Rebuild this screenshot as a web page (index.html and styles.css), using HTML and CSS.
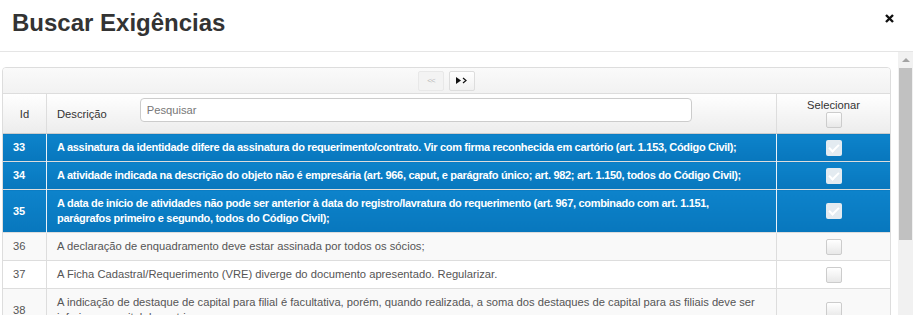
FILE: index.html
```html
<!DOCTYPE html>
<html lang="pt-BR">
<head>
    <meta charset="UTF-8">
    <title>Buscar Exigências</title>
    <link rel="stylesheet" href="styles.css">
</head>
<body>
    <div class="modal">
        <div class="modal-header">
            <h4 class="modal-title">Buscar Exigências</h4>
            <button class="close" type="button">
                <svg width="9" height="9" viewBox="0 0 9 9"><path d="M1 1L8 8M8 1L1 8" stroke="#111" stroke-width="2.4"/></svg>
            </button>
        </div>
        <div class="modal-body">
            <div class="content">
                <div class="grid">
                    <div class="pager">
                        <button class="pg-btn disabled">&lt;&lt;</button>
                        <button class="pg-btn">
                            <svg width="12" height="7" viewBox="0 0 12 7"><path d="M0 0L5 3.5L0 7Z" fill="#111"/><path d="M7 1L10 3.5L7 6" stroke="#111" stroke-width="1.2" fill="none"/></svg>
                        </button>
                    </div>
                    <table class="tbl">
                        <thead>
                            <tr>
                                <th class="col-id">Id</th>
                                <th class="col-desc">
                                    <div class="desc-head">
                                        <span>Descrição</span>
                                        <input class="search" type="text" placeholder="Pesquisar">
                                    </div>
                                </th>
                                <th class="col-sel">Selecionar<br><span class="chk"></span></th>
                            </tr>
                        </thead>
                        <tbody>
                            <tr class="selected">
                                <td class="col-id">33</td>
                                <td>A assinatura da identidade difere da assinatura do requerimento/contrato. Vir com firma reconhecida em cartório (art. 1.153, Código Civil);</td>
                                <td class="col-sel"><span class="chk checked"></span></td>
                            </tr>
                            <tr class="selected">
                                <td class="col-id">34</td>
                                <td>A atividade indicada na descrição do objeto não é empresária (art. 966, caput, e parágrafo único; art. 982; art. 1.150, todos do Código Civil);</td>
                                <td class="col-sel"><span class="chk checked"></span></td>
                            </tr>
                            <tr class="selected">
                                <td class="col-id">35</td>
                                <td>A data de início de atividades não pode ser anterior à data do registro/lavratura do requerimento (art. 967, combinado com art. 1.151,<br>parágrafos primeiro e segundo, todos do Código Civil);</td>
                                <td class="col-sel"><span class="chk checked"></span></td>
                            </tr>
                            <tr class="odd">
                                <td class="col-id">36</td>
                                <td>A declaração de enquadramento deve estar assinada por todos os sócios;</td>
                                <td class="col-sel"><span class="chk"></span></td>
                            </tr>
                            <tr>
                                <td class="col-id">37</td>
                                <td>A Ficha Cadastral/Requerimento (VRE) diverge do documento apresentado. Regularizar.</td>
                                <td class="col-sel"><span class="chk"></span></td>
                            </tr>
                            <tr class="odd">
                                <td class="col-id">38</td>
                                <td>A indicação de destaque de capital para filial é facultativa, porém, quando realizada, a soma dos destaques de capital para as filiais deve ser<br>inferior ao capital da matriz.</td>
                                <td class="col-sel"><span class="chk"></span></td>
                            </tr>
                        </tbody>
                    </table>
                </div>
            </div>
            <div class="scrollbar">
                <div class="sb-arrow"></div>
                <div class="sb-thumb"></div>
            </div>
        </div>
    </div>
</body>
</html>
```

FILE: styles.css
```css
body {
    margin: 0;
    background: #fff;
    font-family: "Liberation Sans", Arial, sans-serif;
    color: #333;
    overflow: hidden;
}

.modal {
    width: 913px;
    height: 315px;
    display: flex;
    flex-direction: column;
}

.modal-header {
    height: 52px;
    box-sizing: border-box;
    display: flex;
    align-items: center;
    justify-content: space-between;
    padding: 0 19px 6px 12px;
    border-bottom: 1px solid #e5e5e5;
}

.modal-title {
    margin: 0;
    font-size: 24px;
    font-weight: bold;
    color: #333;
}

.close {
    border: 0;
    background: none;
    padding: 0;
    margin-top: -8px;
    display: flex;
}

.modal-body {
    flex: 1;
    display: flex;
    min-height: 0;
}

.content {
    flex: 1;
    padding: 15px 7px 0 2px;
    overflow: hidden;
}

.grid {
    border: 1px solid #ddd;
    border-radius: 4px 4px 0 0;
    overflow: hidden;
}

.pager {
    height: 25px;
    display: flex;
    justify-content: center;
    align-items: center;
    gap: 5px;
    background: linear-gradient(#fafafa, #f2f2f2);
    border-bottom: 1px solid #ddd;
}

.pg-btn {
    width: 26px;
    height: 20px;
    border: 1px solid #ddd;
    border-radius: 2px;
    background: linear-gradient(#fff, #f0f0f0);
    display: flex;
    align-items: center;
    justify-content: center;
    font-size: 8px;
    padding: 0;
    color: #111;
}

.pg-btn.disabled {
    color: #bbb;
    background: #f3f3f3;
    border-color: #e8e8e8;
    letter-spacing: -1px;
}

.tbl {
    width: 100%;
    border-collapse: collapse;
    font-size: 11.2px;
}

.tbl th {
    height: 39px;
    background: linear-gradient(#fff, #ececec);
    font-weight: normal;
    color: #333;
    font-size: 11.2px;
    border-bottom: 1px solid #ccc;
}

.tbl th.col-sel {
    line-height: 13px;
}

.tbl td, .tbl th {
    border-right: 1px solid #ddd;
    padding: 0 10px;
}

.tbl td:last-child, .tbl th:last-child {
    border-right: 0;
}

.col-id {
    width: 23px;
    text-align: left;
}

.tbl th.col-id {
    text-align: center;
    padding: 0;
}

.col-sel {
    width: 93px;
    text-align: center;
}

.desc-head {
    display: flex;
    align-items: center;
    gap: 33px;
    margin-right: 74px;
}

.search {
    flex: 1;
    height: 24px;
    box-sizing: border-box;
    border: 1px solid #ccc;
    border-radius: 4px;
    padding: 0 6px;
    font-family: inherit;
    font-size: 11.2px;
    margin-bottom: 8px;
}

.search::placeholder {
    color: #777;
}

.tbl td {
    padding-top: 6px;
    padding-bottom: 6px;
    border-top: 1px solid #ddd;
    color: #555;
    line-height: 15px;
}

.tbl td.col-sel {
    padding-top: 0;
    padding-bottom: 0;
    line-height: 0;
}

.tbl td .chk {
    display: block;
    margin: 0 auto;
}

.tbl tr.odd td {
    background: #f9f9f9;
}

.tbl tr.selected td {
    background: linear-gradient(#0d83cb, #0877bd);
    color: #fff;
    font-weight: bold;
    font-size: 11px;
    letter-spacing: -0.31px;
    border-color: #eaf2f8;
    border-top-color: #fff;
}

.tbl tr.selected td.col-id {
    letter-spacing: 0;
}

.tbl tr.selected + tr td {
    border-top-color: #ddd;
}

.chk {
    display: inline-block;
    width: 14px;
    height: 14px;
    border: 1px solid #ccc;
    border-radius: 2px;
    background: linear-gradient(#fff, #e8e8e8);
    vertical-align: middle;
}

.chk.checked {
    width: 16px;
    height: 16px;
    border: 0;
    background: #e3ebf1;
    position: relative;
}

.chk.checked::after {
    content: "";
    position: absolute;
    left: 5px;
    top: 2px;
    width: 4px;
    height: 8px;
    border: solid #fff;
    border-width: 0 2px 2px 0;
    transform: rotate(45deg);
}

.scrollbar {
    width: 15px;
    background: #f1f1f1;
    display: flex;
    flex-direction: column;
    align-items: center;
}

.sb-arrow {
    margin-top: 6px;
    width: 0;
    height: 0;
    border-left: 4px solid transparent;
    border-right: 4px solid transparent;
    border-bottom: 4px solid #a3a3a3;
}

.sb-thumb {
    margin-top: 6px;
    width: 13px;
    height: 172px;
    background: #c1c1c1;
}
```
